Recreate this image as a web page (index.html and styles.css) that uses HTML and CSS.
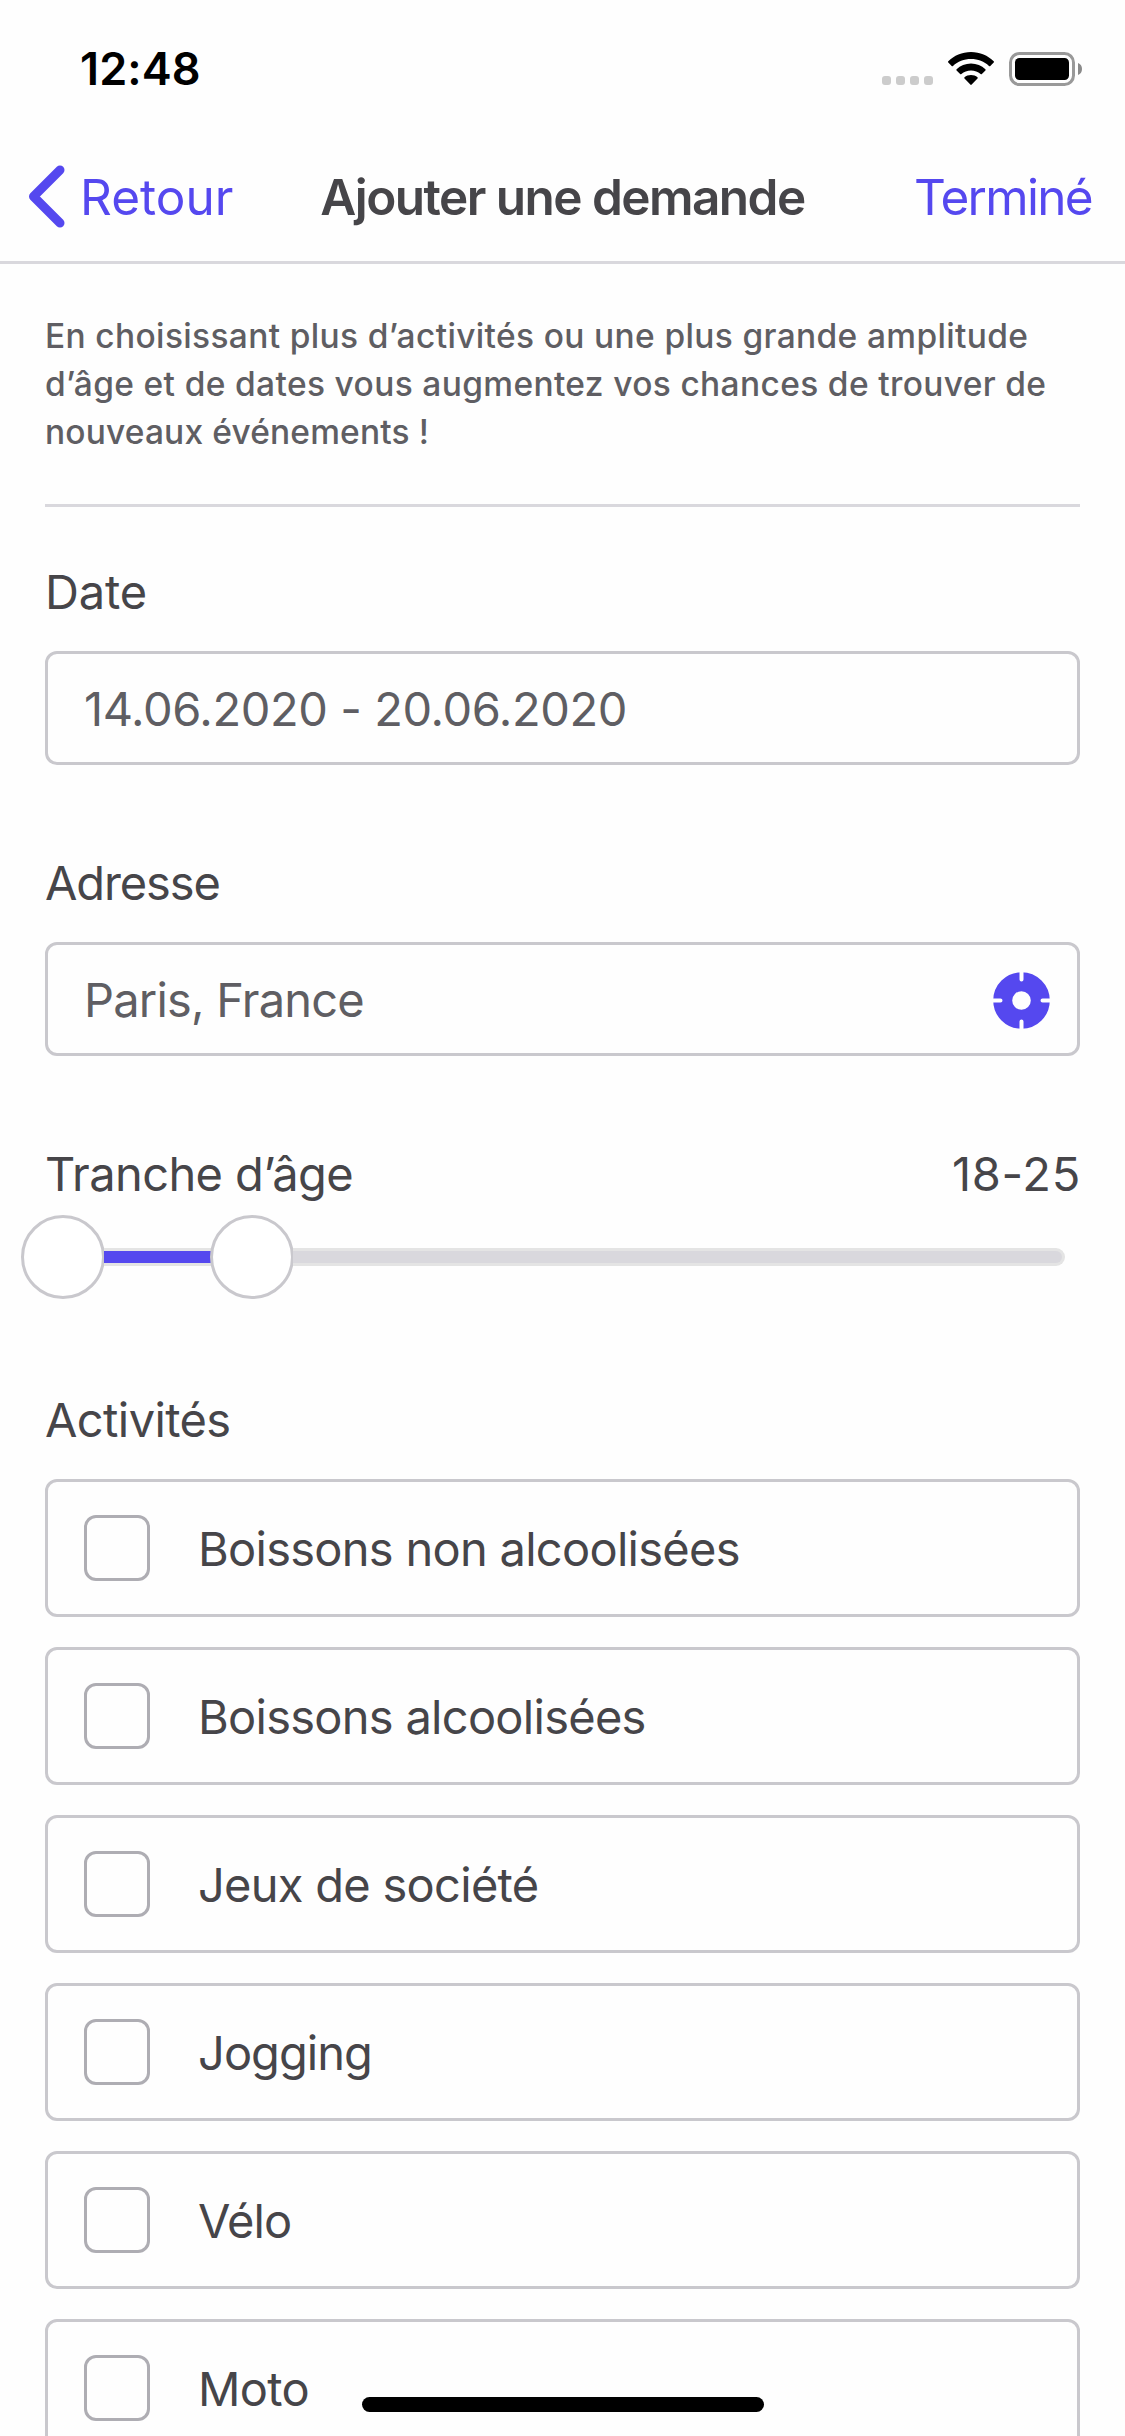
FILE: index.html
```html
<!DOCTYPE html>
<html lang="fr">
<head>
<meta charset="utf-8">
<title>Ajouter une demande</title>
<link rel="stylesheet" href="styles.css">
</head>
<body>
<div class="screen">
  <div class="status">
    <span class="clock">12:48</span>
    <div class="indicators">
      <div class="signal"><i></i><i></i><i></i><i></i></div>
      <svg class="wifi" width="46" height="34" viewBox="0 0 46 34">
        <path d="M23 0C32 0 40 3.500 45.700 9.300Q46.300 10 45.700 10.600L42.300 14Q41.700 14.500 41 13.900C36.200 9.500 30 7 23 7S9.800 9.500 5 13.900Q4.300 14.500 3.700 14L.3 10.600Q-.3 10 .3 9.300C6 3.500 14 0 23 0Z"/>
        <path d="M23 11.500C28.600 11.500 33.600 13.600 37.400 17.200Q38 17.900 37.400 18.500L33.900 21.900Q33.300 22.500 32.600 21.900C30 19.700 26.700 18.400 23 18.400S16 19.700 13.400 21.900Q12.700 22.500 12.100 21.900L8.600 18.500Q8 17.900 8.600 17.200C12.400 13.600 17.400 11.500 23 11.500Z"/>
        <path d="M23 23C25.500 23 27.800 23.900 29.500 25.300Q30.100 26 29.500 26.600L23.700 32.600Q23 33.200 22.300 32.600L16.500 26.600Q15.900 26 16.500 25.300C18.200 23.900 20.500 23 23 23Z"/>
      </svg>
      <svg class="battery" width="74" height="34" viewBox="0 0 74 34">
        <rect x="1.500" y="1.500" width="63" height="31" rx="9" fill="none" stroke="#999" stroke-width="3"/>
        <rect x="6" y="6" width="54" height="22" rx="4.500"/>
        <path d="M69 11Q73 12.500 73 17T69 23Z" fill="#8a8a8a"/>
      </svg>
    </div>
  </div>
  <header class="navbar">
    <div class="back">
      <svg width="37" height="63" viewBox="0 0 37 63"><path d="M32 5L5.500 31.500L32 58" fill="none" stroke="#5548ef" stroke-width="9" stroke-linecap="round" stroke-linejoin="round"/></svg>
      <span class="back-label">Retour</span>
    </div>
    <h1 class="title">Ajouter une demande</h1>
    <span class="done">Terminé</span>
  </header>
  <main class="form">
    <p class="intro">En choisissant plus d’activités ou une plus grande amplitude<br>d’âge et de dates vous augmentez vos chances de trouver de<br><span class="intro-end">nouveaux événements !</span></p>
    <section class="field">
      <div class="label date">Date</div>
      <div class="input range">14.06.2020 - 20.06.2020</div>
    </section>
    <section class="field">
      <div class="label address">Adresse</div>
      <div class="input city"><span>Paris, France</span>
        <svg width="57" height="57" viewBox="0 0 57 57"><circle cx="28.500" cy="28.500" r="18.800" fill="none" stroke="#5548ef" stroke-width="19"/><path d="M28.500-2V7.500M28.500 49.500V59M-2 28.500H7.500M49.500 28.500H59" stroke="#fff" stroke-width="4" stroke-linecap="round"/></svg>
      </div>
    </section>
    <section class="field age">
      <div class="label"><span>Tranche d’âge</span><span class="age-value">18-25</span></div>
      <div class="slider">
        <span class="knob"></span><span class="fill"></span><span class="knob"></span><span class="rest"></span>
      </div>
    </section>
    <section class="activities">
      <div class="label">Activités</div>
      <div class="option"><span class="check"></span><span>Boissons non alcoolisées</span></div>
      <div class="option"><span class="check"></span><span>Boissons alcoolisées</span></div>
      <div class="option"><span class="check"></span><span>Jeux de société</span></div>
      <div class="option tight"><span class="check"></span><span>Jogging</span></div>
      <div class="option tight"><span class="check"></span><span>Vélo</span></div>
      <div class="option"><span class="check"></span><span>Moto</span></div>
    </section>
  </main>
  <div class="home-bar"></div>
</div>
</body>
</html>
```
FILE: styles.css
```css
* { box-sizing: border-box; }
body { margin: 0; background: #fff; font-family: Inter, "Liberation Sans", sans-serif; color: #464549; }
.screen { position: relative; width: 1125px; height: 2436px; overflow: hidden; background: #fefefe; }
.status { height: 132px; padding: 0 42px 0 80px; display: flex; justify-content: space-between; }
.clock { margin-top: 39px; font-size: 45px; line-height: 60px; font-weight: 600; letter-spacing: 0.1px; color: #000; }
.indicators { display: flex; align-items: flex-start; margin-top: 52px; }
.signal { display: flex; gap: 5px; margin: 24px 15px 0 0; }
.signal i { width: 9px; height: 9px; border-radius: 3px; background: #ccc; }
.wifi { margin-right: 15px; }
.navbar { height: 132px; border-bottom: 3px solid #d9d8dd; padding: 0 32px 0 28px; display: grid; grid-template-columns: 1fr auto 1fr; align-items: center; font-size: 49.500px; line-height: 60px; }
.back { display: flex; align-items: center; color: #5548ef; }
.back-label { margin-left: 15px; }
.title { margin: 0; padding-left: 4px; font-size: 49.500px; font-weight: 600; letter-spacing: -1.55px; }
.done { justify-self: end; padding-right: 1px; color: #5548ef; letter-spacing: -1.7px; }
.form { padding: 0 45px; }
.intro { margin: 0; height: 243px; padding-top: 48px; border-bottom: 3px solid #d9d8dd; font-size: 33.500px; line-height: 48px; font-weight: 500; letter-spacing: 0.35px; color: #5f5e63; white-space: nowrap; }
.intro-end { letter-spacing: 0.15px; }
.field { height: 291px; padding-top: 54px; }
.label { height: 60px; padding-top: 1px; line-height: 60px; font-size: 47px; letter-spacing: -0.6px; display: flex; justify-content: space-between; margin-bottom: 30px; }
.date { letter-spacing: -0.2px; }
.address { letter-spacing: -1.1px; }
.age-value { letter-spacing: 0.7px; margin-right: -1px; }
.input { height: 114px; border: 3px solid #c9c8cd; border-radius: 12px; padding: 2px 27px 0 36px; display: flex; align-items: center; justify-content: space-between; font-size: 47px; line-height: 60px; color: #5f5e63; }
.range { letter-spacing: -0.42px; }
.city { letter-spacing: -0.8px; }
.age { height: 246px; }
.age .label { margin-bottom: 0; }
.slider { margin: 12px 15px 0 -24px; height: 84px; display: flex; align-items: center; }
.knob { width: 84px; height: 84px; border: 3px solid #c9c8cd; border-radius: 50%; background: #fff; flex: none; }
.fill { width: 107px; margin: 0 -1px; height: 18px; border: solid #e4e4e4; border-width: 3px 0; background: #5548ef; }
.rest { flex: 1; margin-left: -1px; height: 18px; border: 3px solid #e4e4e4; border-left: 0; border-radius: 0 9px 9px 0; background: #d9d8dd; }
.activities { padding-top: 54px; }
.option { height: 138px; margin-bottom: 30px; border: 3px solid #c9c8cd; border-radius: 12px; padding-left: 36px; display: flex; align-items: center; font-size: 47px; line-height: 60px; letter-spacing: -0.72px; }
.option span:last-child { padding-top: 2px; }
.tight { letter-spacing: -0.95px; }
.check { width: 66px; height: 66px; margin-right: 48px; border: 3px solid #aeadb3; border-radius: 12px; }
.home-bar { position: absolute; left: 362px; top: 2397px; width: 402px; height: 15px; border-radius: 8px; background: #000; }
```
